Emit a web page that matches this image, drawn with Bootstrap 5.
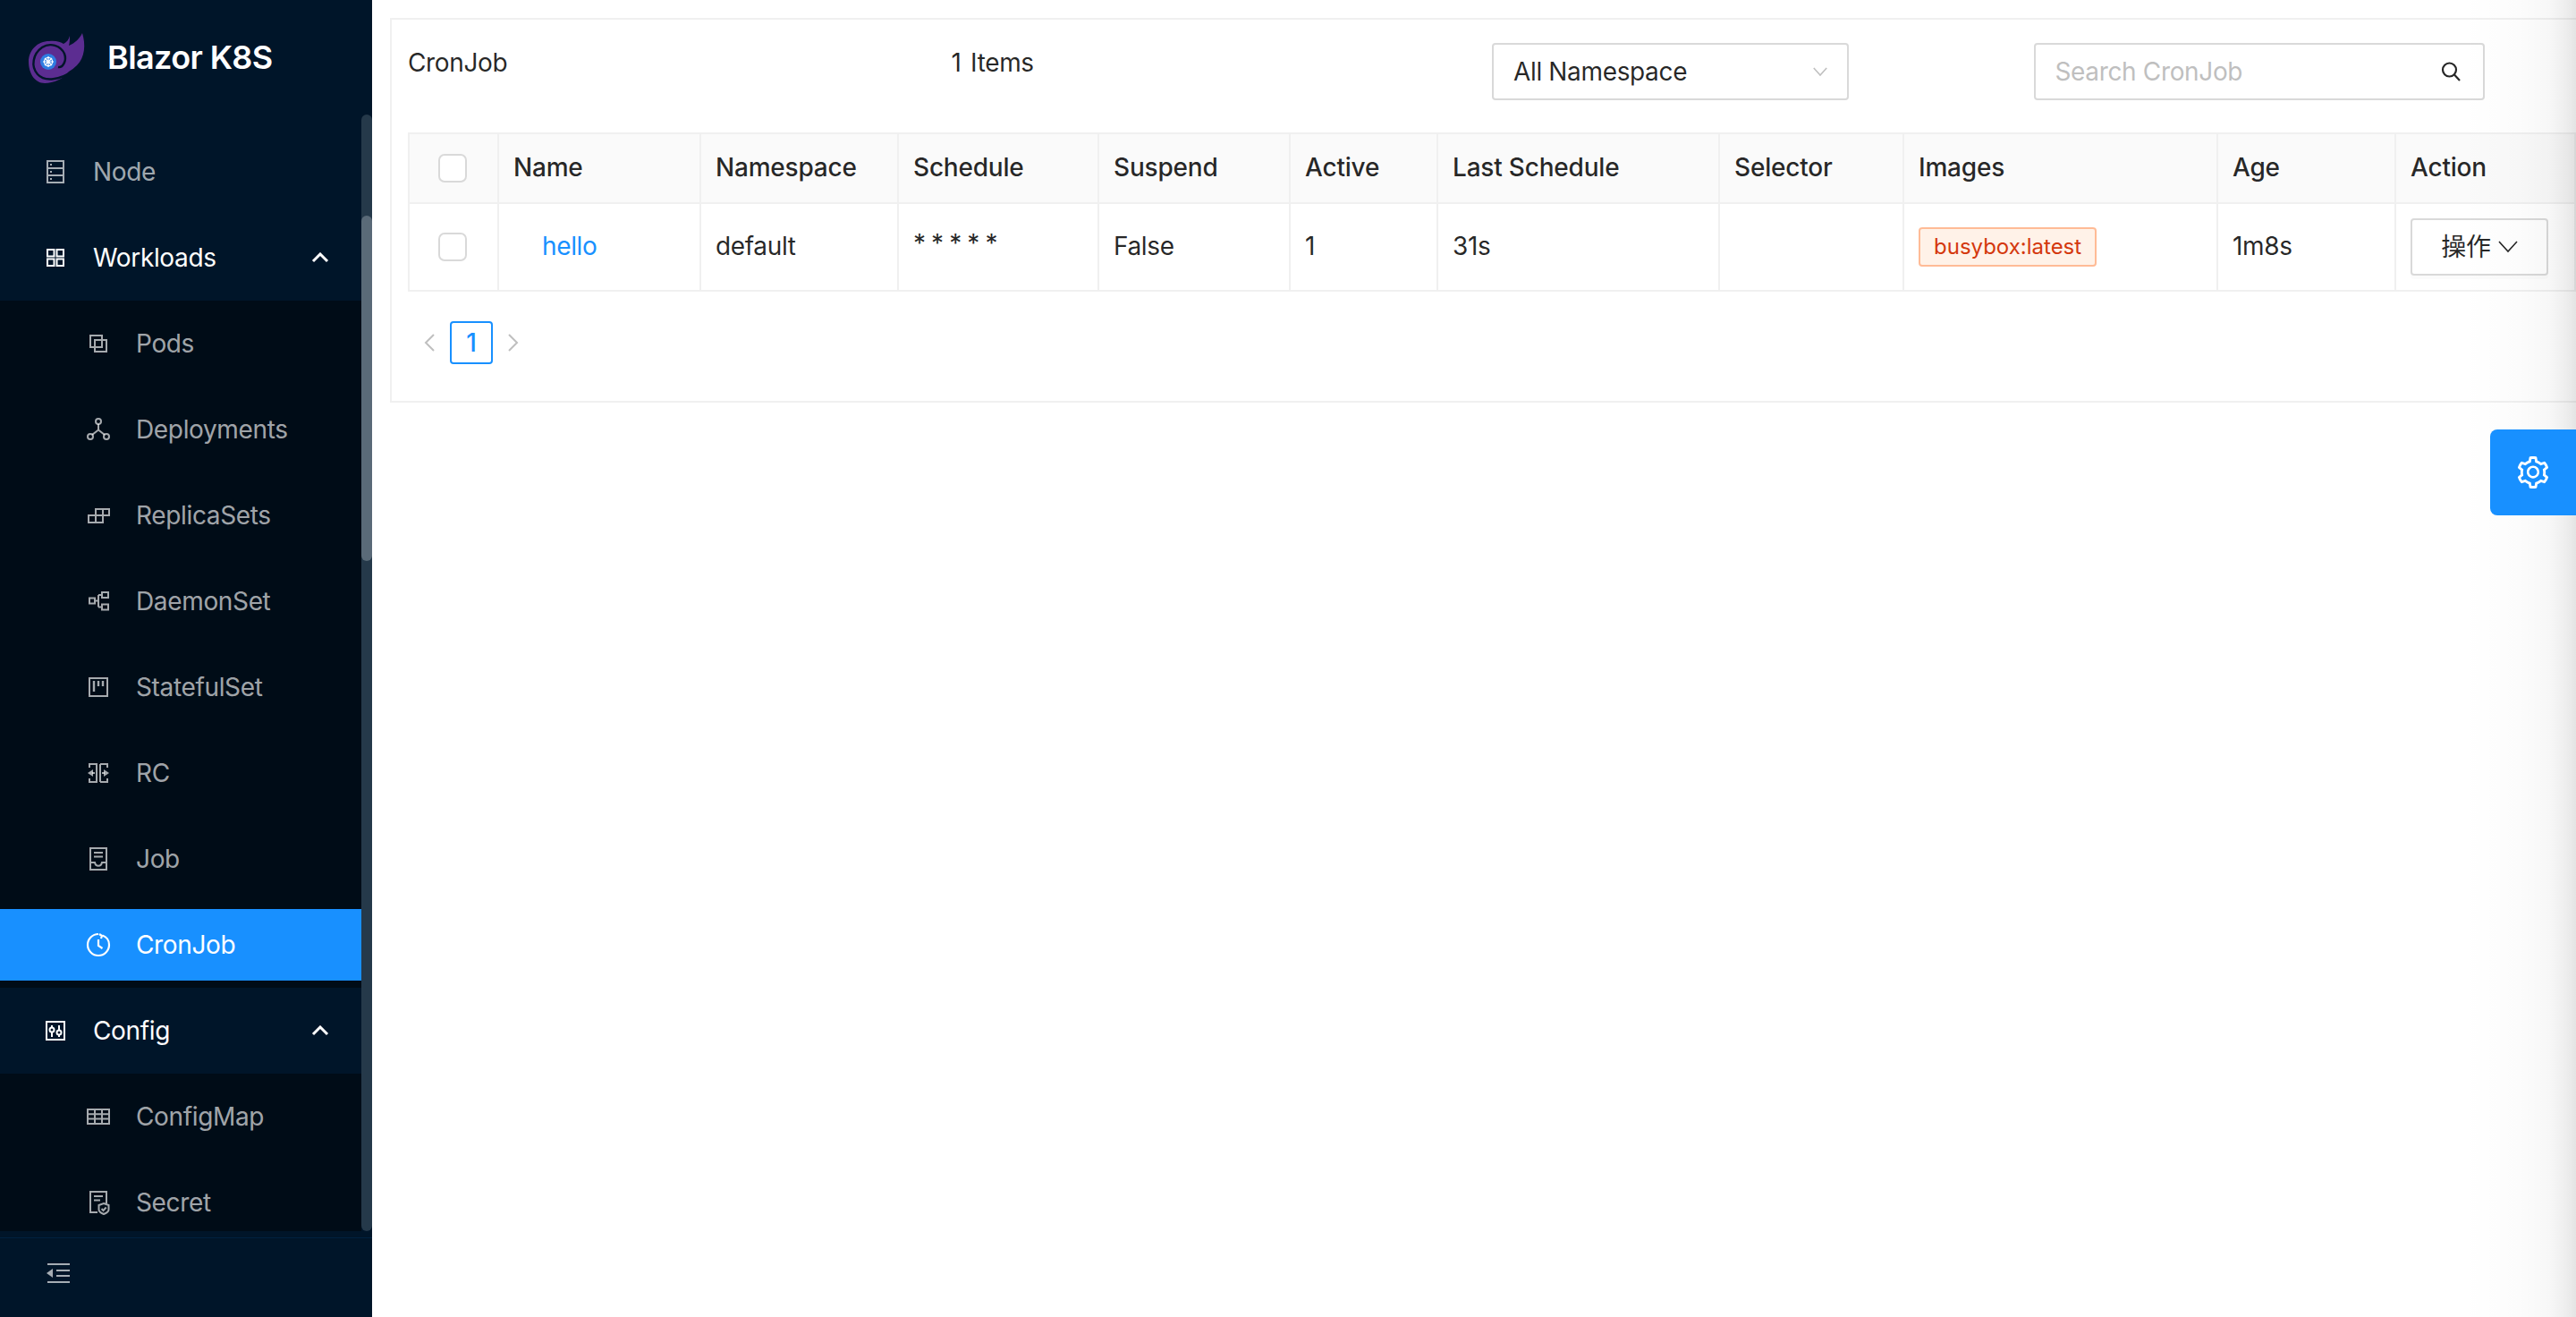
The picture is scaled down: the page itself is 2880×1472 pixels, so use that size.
<!DOCTYPE html>
<html lang="en">
<head>
<meta charset="utf-8">
<title>Blazor K8S</title>
<link href="https://cdn.jsdelivr.net/npm/bootstrap@5.3.0/dist/css/bootstrap.min.css" rel="stylesheet">
<script src="https://cdn.jsdelivr.net/npm/bootstrap@5.3.0/dist/js/bootstrap.bundle.min.js"></script>
<style>
html,body{height:100%;margin:0}
body{font-family:Inter,"Noto Sans CJK SC",sans-serif;font-size:28px;line-height:44px;letter-spacing:-.35px;color:rgba(0,0,0,.85);background:#fff;overflow:hidden}
.shell{height:100vh;position:relative;overflow:hidden}
.side{width:416px;background:#001529;flex:none}
.brand{height:128px;color:#fff;font-size:36px;font-weight:600;line-height:1;letter-spacing:-.6px}
.brand-logo{width:120px;height:120px;flex:none;margin-top:-8px}
.side-body{height:1248px;min-height:0}
.menu{flex:1;min-width:0;overflow:hidden;display:block;padding-top:16px}
.m-item{height:96px;padding-left:48px;color:rgba(255,255,255,.65);gap:28px}
.m-item svg.ico{width:28px;height:28px;flex:none}
.m-open{color:#fff}
.m-sub{background:#000c17}
.m-sub .m-item{padding-left:96px}
.m-sub .m-active{height:80px;margin:8px 0;background:#1890ff;color:#fff}
.m-sub-jobs{overflow:hidden}
.m-sub-last{height:176px;overflow:hidden}
.chev{margin-left:auto;margin-right:36px;width:20px;height:12px}
.track{width:12px;background:#25394a;border-radius:6px;flex:none}
.thumb{width:12px;height:386px;margin-top:113px;background:#5a6a78;border-radius:6px}
.side-foot{height:88px;margin-top:7px;border-top:1px solid #002140;padding:0 0 10px 49px}
.side-foot svg{width:30px;height:26px}
.main{flex:1;min-width:0;padding:20px 0 0 20px}
.panel{border:2px solid #f0f0f0;border-right:0;padding:26px 0 43px 18px;height:430px}
.tool{margin:0 0 36px;--bs-gutter-x:0;width:2422px}
.title-text{line-height:44px}
.items-text{margin-left:2px;word-spacing:3px}
.pick,.find{height:64px;border:2px solid #d9d9d9;border-radius:4px;padding:0 22px;margin-left:1px}
.pick{width:399px;padding-right:22px}
.find{width:504px}
.find input{border:0;outline:0;padding:0;flex:1;min-width:0;font:inherit;letter-spacing:inherit;color:inherit;background:transparent}
.find input::placeholder{color:#bfbfbf;opacity:1}
.pick-arrow{width:16px;height:10px;color:#bfbfbf;margin-left:auto}
.find-icon{width:28px;height:28px;margin-right:0}
.table.grid-table{table-layout:fixed;width:2422px;margin:0;--bs-table-color:rgba(0,0,0,.85);--bs-table-border-color:#f0f0f0;font-size:28px}
.table.grid-table>:not(caption)>*>*{border:2px solid #f0f0f0;padding:0 16px 3px;vertical-align:middle;line-height:44px}
.table.grid-table thead th{height:78px;background:#fafafa;font-weight:500;letter-spacing:-.2px}
.table.grid-table tbody td{height:98px}
.w1{width:100px}.w2{width:226px}.w3{width:221px}.w4{width:224px}.w5{width:214px}.w6{width:165px}.w7{width:315px}.w8{width:206px}.w9{width:351px}.w10{width:199px}.w11{width:201px}
.box{width:32px;height:32px;border:2px solid #d9d9d9;border-radius:4px;display:block;float:none;margin:3px 0 0 16px}
.hello{color:#1890ff;text-decoration:none;margin-left:32px}
.stars{position:relative;top:-3px;letter-spacing:-.9px}
.img-tag{display:inline-block;font-size:24px;letter-spacing:0;line-height:40px;height:44px;padding:0 15px;background:#fff2e8;border:2px solid #ffbb96;border-radius:4px;color:#d4380d;vertical-align:middle;margin-top:3px}
.act-btn{width:154px;height:64px;padding:0;font-size:28px;line-height:44px;letter-spacing:inherit;color:rgba(0,0,0,.85);background:#fff;border:2px solid #d9d9d9;border-radius:4px;box-shadow:0 4px 0 rgba(0,0,0,.015);gap:8px;margin-top:3px}
.act-btn svg{width:22px;height:14px}
.pager{margin:33px 0 0;gap:0;align-items:center}
.pager .page-link{border:0;background:none;padding:0;color:#bfbfbf;width:48px;height:48px;display:flex;align-items:center;justify-content:center}
.pager .page-item:first-child .page-link,.pager .page-item:last-child .page-link{border-radius:0}
.pager .active .page-link{background:#fff;color:#1890ff;border:2px solid #1890ff;border-radius:4px;font-size:28px;font-weight:500;line-height:44px}
.pager svg{width:12px;height:20px}
.edge-shade{position:absolute;top:0;right:0;bottom:0;width:130px;background:linear-gradient(to right,rgba(0,0,0,0),rgba(0,0,0,.012) 50%,rgba(0,0,0,.03) 77%,rgba(0,0,0,.07) 92%,rgba(0,0,0,.105));pointer-events:none}
.gear-tab{position:absolute;top:480px;right:0;width:96px;height:96px;background:#1890ff;border-radius:8px 0 0 8px;border:0;padding:0;color:#fff}
.gear-tab svg{width:36px;height:36px}
</style>
</head>
<body>
<div class="shell d-flex">
  <aside class="side d-flex flex-column">
    <div class="brand d-flex align-items-center">
      <svg class="brand-logo" viewBox="0 0 120 120" aria-hidden="true">
        <path fill="#5c2d91" d="M92 37C96 50 95 64 86 73C83 76 80 78 77 80C71 88 60 93 50 93C39 93 32 82 32 69C32 56 42 46 55 46C62 45 68 47 71 49C75 47 77 44 78 40C78 44 78 47 77 51C84 48 89 43 92 37Z"/>
        <path fill="none" stroke="#001529" stroke-width="2.4" d="M80 80C68 89 50 92 42 83C34 74 37 60 47 53C56 47 68 51 72 60C75 68 70 76 65 75"/>
        <circle cx="54" cy="69" r="9" fill="#2f7de1"/>
        <g fill="none" stroke="#fff" stroke-width="1.2"><circle cx="54" cy="69" r="4.6"/><path d="M54 63v12M48 69h12M50 65l8 8M58 65l-8 8"/></g>
      </svg>
      <span>Blazor K8S</span>
    </div>
    <div class="side-body d-flex">
      <nav class="menu">
        <div class="m-item d-flex align-items-center">
          <svg class="ico" viewBox="0 0 28 28" fill="none" stroke="currentColor" stroke-width="2"><path d="M5 2h18v24H5zM5 10h18M5 18h18"/><path d="M8 6h2M8 14h2M8 22h2"/></svg>
          <span>Node</span>
        </div>
        <div class="m-item m-open d-flex align-items-center">
          <svg class="ico" viewBox="0 0 28 28" fill="none" stroke="currentColor" stroke-width="2"><path d="M5 5h7.500v7.500H5zM15.500 5H23v7.500h-7.500zM5 15.500h7.500V23H5zM15.500 15.500H23V23h-7.500z"/></svg>
          <span>Workloads</span>
          <svg class="chev" viewBox="0 0 20 12" fill="none" stroke="currentColor" stroke-width="3"><path d="M2 10l8-8 8 8"/></svg>
        </div>
        <div class="m-sub m-sub-jobs">
          <div class="m-item d-flex align-items-center">
            <svg class="ico" viewBox="0 0 28 28" fill="none" stroke="currentColor" stroke-width="2"><path d="M5 5h13v13H5zM10 10h13v13H10z"/></svg>
            <span>Pods</span>
          </div>
          <div class="m-item d-flex align-items-center">
            <svg class="ico" viewBox="0 0 28 28" fill="none" stroke="currentColor" stroke-width="2"><circle cx="14" cy="5" r="3"/><circle cx="5" cy="22" r="3"/><circle cx="23" cy="22" r="3"/><path d="M14 8v6.500M14 14.500l-7 5.500M14 14.500l7 5.500"/></svg>
            <span>Deployments</span>
          </div>
          <div class="m-item d-flex align-items-center">
            <svg class="ico" viewBox="0 0 28 28" fill="none" stroke="currentColor" stroke-width="2"><path d="M3 14h16v8H3zM11 14v8M11 14V7h15v7H19M19 7v7"/></svg>
            <span>ReplicaSets</span>
          </div>
          <div class="m-item d-flex align-items-center">
            <svg class="ico" viewBox="0 0 28 28" fill="none" stroke="currentColor" stroke-width="2"><path d="M4 10.500h6v6H4zM18 4h7v6h-7zM18 17.500h7v6h-7zM10 13.500h4M14 7v13.500M14 7h4M14 20.500h4"/></svg>
            <span>DaemonSet</span>
          </div>
          <div class="m-item d-flex align-items-center">
            <svg class="ico" viewBox="0 0 28 28" fill="none" stroke="currentColor" stroke-width="2"><path d="M4 4h20v20H4z"/><path stroke-width="2.400" d="M9 7v12M14 7v6M19 7v6"/></svg>
            <span>StatefulSet</span>
          </div>
          <div class="m-item d-flex align-items-center">
            <svg class="ico" viewBox="0 0 28 28" fill="none" stroke="currentColor" stroke-width="2"><path d="M4 8V4h8v20H4v-4M16 4v20M16 4h8v4M16 24h8v-4"/><path fill="currentColor" stroke="none" d="M2 14l6-4v8zM26 14l-6-4v8z"/><path d="M7 14h3M18 14h3"/></svg>
            <span>RC</span>
          </div>
          <div class="m-item d-flex align-items-center">
            <svg class="ico" viewBox="0 0 28 28" fill="none" stroke="currentColor" stroke-width="2"><path d="M5 2h18v24H5zM9 7h10M9 11.500h10M5 18h5c1 5 7 5 8 0h5"/></svg>
            <span>Job</span>
          </div>
          <div class="m-item m-active d-flex align-items-center">
            <svg class="ico" viewBox="0 0 28 28" fill="none" stroke="currentColor" stroke-width="2.200"><path d="M18.500 3.500C23 5 26 9.200 26 14c0 6.600-5.400 12-12 12S2 20.600 2 14 7.400 2 14 2"/><path d="M14 8v7l4.500 3"/><path d="M15 2l3 2-1 3"/></svg>
            <span>CronJob</span>
          </div>
        </div>
        <div class="m-item m-open d-flex align-items-center">
          <svg class="ico" viewBox="0 0 28 28" fill="none" stroke="currentColor" stroke-width="2"><path d="M4 4h20v20H4z"/><path d="M10 8v2M10 16v5M18 8v5M18 19v2"/><circle cx="10" cy="13" r="2.500"/><circle cx="18" cy="16" r="2.500"/></svg>
          <span>Config</span>
          <svg class="chev" viewBox="0 0 20 12" fill="none" stroke="currentColor" stroke-width="3"><path d="M2 10l8-8 8 8"/></svg>
        </div>
        <div class="m-sub m-sub-last">
          <div class="m-item d-flex align-items-center">
            <svg class="ico" viewBox="0 0 28 28" fill="none" stroke="currentColor" stroke-width="2"><path d="M2 6h24v16H2zM2 11.300h24M2 16.600h24M10 6v16M18 6v16"/></svg>
            <span>ConfigMap</span>
          </div>
          <div class="m-item d-flex align-items-center">
            <svg class="ico" viewBox="0 0 28 28" fill="none" stroke="currentColor" stroke-width="2"><path d="M13 25H5V2h18v13M9 7h10M9 11.500h7"/><path d="M20 15l5.500 2v5c0 2.500-3 4-5.500 5-2.500-1-5.500-2.500-5.500-5v-5z"/><path d="M17.500 21l2 2 3.200-3.500"/></svg>
            <span>Secret</span>
          </div>
        </div>
      </nav>
      <div class="track"><div class="thumb"></div></div>
    </div>
    <div class="side-foot d-flex align-items-center">
      <svg viewBox="0 0 30 26" aria-hidden="true"><path fill="none" stroke="#a6adb4" stroke-width="2.200" d="M4 3h25M14 10h15M14 16h15M4 23h25"/><path fill="#a6adb4" d="M3 13l7-5v10z"/></svg>
    </div>
  </aside>

  <main class="main">
    <section class="panel">
      <div class="row tool">
        <div class="col-3"><span class="title-text">CronJob</span></div>
        <div class="col-3"><span class="title-text items-text">1 Items</span></div>
        <div class="col-3">
          <div class="pick d-flex align-items-center">
            <span>All Namespace</span>
            <svg class="pick-arrow" viewBox="0 0 20 12" fill="none" stroke="currentColor" stroke-width="2"><path d="M1 1l9 10 9-10"/></svg>
          </div>
        </div>
        <div class="col-3">
          <div class="find d-flex align-items-center">
            <input type="text" placeholder="Search CronJob" aria-label="Search CronJob">
            <svg class="find-icon" viewBox="0 0 28 28" fill="none" stroke="#262626" stroke-width="2.200"><circle cx="12.500" cy="12" r="7.500"/><path d="M18 17.500l6 6.500"/></svg>
          </div>
        </div>
      </div>

      <table class="table table-bordered grid-table">
        <colgroup>
          <col class="w1"><col class="w2"><col class="w3"><col class="w4"><col class="w5"><col class="w6"><col class="w7"><col class="w8"><col class="w9"><col class="w10"><col class="w11">
        </colgroup>
        <thead>
          <tr>
            <th><input class="form-check-input box" type="checkbox" aria-label="Select all"></th>
            <th>Name</th><th>Namespace</th><th>Schedule</th><th>Suspend</th><th>Active</th><th>Last Schedule</th><th>Selector</th><th>Images</th><th>Age</th><th>Action</th>
          </tr>
        </thead>
        <tbody>
          <tr>
            <td><input class="form-check-input box" type="checkbox" aria-label="Select row"></td>
            <td><a class="hello" href="#">hello</a></td>
            <td>default</td>
            <td><span class="stars">* * * * *</span></td>
            <td>False</td>
            <td>1</td>
            <td>31s</td>
            <td></td>
            <td><span class="img-tag">busybox:latest</span></td>
            <td>1m8s</td>
            <td>
              <button type="button" class="btn act-btn d-inline-flex align-items-center justify-content-center">操作
                <svg viewBox="0 0 22 14" fill="none" stroke="currentColor" stroke-width="1.600"><path d="M1 1l10 11L21 1"/></svg>
              </button>
            </td>
          </tr>
        </tbody>
      </table>

      <ul class="pagination pager">
        <li class="page-item"><a class="page-link" href="#" aria-label="Previous"><svg viewBox="0 0 12 20" fill="none" stroke="currentColor" stroke-width="2"><path d="M11 1L2 10l9 9"/></svg></a></li>
        <li class="page-item active"><a class="page-link" href="#">1</a></li>
        <li class="page-item"><a class="page-link" href="#" aria-label="Next"><svg viewBox="0 0 12 20" fill="none" stroke="currentColor" stroke-width="2"><path d="M1 1l9 9-9 9"/></svg></a></li>
      </ul>
    </section>
  </main>

  <div class="edge-shade"></div>
  <button type="button" class="gear-tab d-flex align-items-center justify-content-center" aria-label="Settings">
    <svg viewBox="64 64 896 896" fill="currentColor"><path d="M924.8 625.7l-65.5-56c3.1-19 4.7-38.4 4.7-57.8s-1.6-38.8-4.7-57.8l65.5-56a32.03 32.03 0 0 0 9.3-35.2l-.9-2.6a443.74 443.74 0 0 0-79.7-137.9l-1.8-2.1a32.12 32.12 0 0 0-35.1-9.5l-81.3 28.9c-30-24.6-63.5-44-99.7-57.6l-15.7-85a32.05 32.05 0 0 0-25.8-25.7l-2.7-.5c-52.1-9.4-106.9-9.4-159 0l-2.7.5a32.05 32.05 0 0 0-25.8 25.7l-15.8 85.4a351.86 351.86 0 0 0-99 57.4l-81.9-29.1a32 32 0 0 0-35.1 9.5l-1.8 2.1a446.02 446.02 0 0 0-79.7 137.9l-.9 2.6c-4.5 12.5-.8 26.5 9.3 35.2l66.3 56.6c-3.1 18.8-4.6 38-4.6 57.1 0 19.2 1.5 38.4 4.6 57.1L99 625.5a32.03 32.03 0 0 0-9.3 35.2l.9 2.6c18.1 50.4 44.9 96.9 79.7 137.9l1.8 2.1a32.12 32.12 0 0 0 35.1 9.5l81.9-29.1c29.8 24.5 63.1 43.9 99 57.4l15.8 85.4a32.05 32.05 0 0 0 25.8 25.7l2.7.5a449.4 449.4 0 0 0 159 0l2.7-.5a32.05 32.05 0 0 0 25.8-25.7l15.7-85a350 350 0 0 0 99.7-57.6l81.3 28.9a32 32 0 0 0 35.1-9.5l1.8-2.1c34.8-41.1 61.6-87.5 79.7-137.9l.9-2.6c4.5-12.3.8-26.3-9.3-35zM788.3 465.9c2.5 15.1 3.8 30.6 3.8 46.1s-1.3 31-3.8 46.1l-6.6 40.1 74.7 63.9a370.03 370.03 0 0 1-42.6 73.6L721 702.8l-31.4 25.8c-23.9 19.6-50.5 35-79.3 45.8l-38.1 14.3-17.9 97a377.5 377.5 0 0 1-85 0l-17.9-97.2-37.8-14.5c-28.5-10.8-55-26.2-78.7-45.7l-31.4-25.9-93.4 33.2c-17-22.9-31.2-47.6-42.6-73.6l75.5-64.5-6.5-40c-2.4-14.9-3.7-30.3-3.7-45.5 0-15.3 1.2-30.6 3.7-45.5l6.5-40-75.5-64.5c11.3-26.1 25.6-50.7 42.6-73.6l93.4 33.2 31.4-25.9c23.7-19.5 50.2-34.9 78.7-45.7l37.9-14.3 17.9-97.2c28.1-3.2 56.8-3.2 85 0l17.9 97 38.1 14.3c28.7 10.8 55.4 26.2 79.3 45.8l31.4 25.8 92.8-32.9c17 22.9 31.2 47.6 42.6 73.6L781.8 426l6.5 39.9zM512 326c-97.2 0-176 78.8-176 176s78.8 176 176 176 176-78.8 176-176-78.8-176-176-176zm79.2 255.2A111.6 111.6 0 0 1 512 614c-29.9 0-58-11.7-79.2-32.8A111.6 111.6 0 0 1 400 502c0-29.9 11.7-58 32.8-79.2C454 401.6 482.1 390 512 390c29.9 0 58 11.6 79.2 32.8A111.6 111.6 0 0 1 624 502c0 29.9-11.7 58-32.8 79.2z"/></svg>
  </button>
</div>
</body>
</html>
